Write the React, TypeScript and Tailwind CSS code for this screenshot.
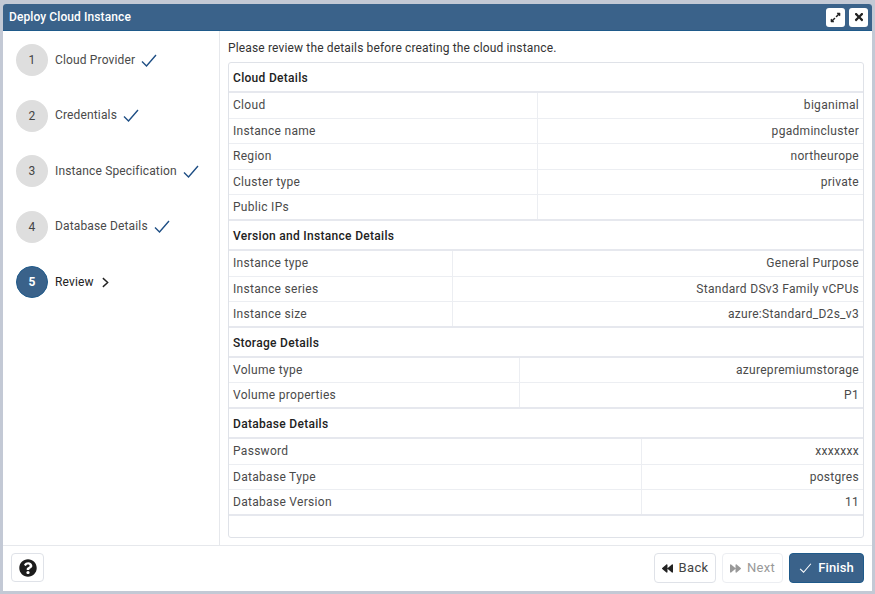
import React from 'react'
import { FaBackward, FaExpandAlt, FaForward, FaQuestionCircle, FaTimes } from 'react-icons/fa'

const steps = ['Cloud Provider', 'Credentials', 'Instance Specification', 'Database Details', 'Review']

const sections = [
  {
    title: 'Cloud Details',
    labelWidth: 'grid-cols-[309px_1fr]',
    rows: [
      ['Cloud', 'biganimal'],
      ['Instance name', 'pgadmincluster'],
      ['Region', 'northeurope'],
      ['Cluster type', 'private'],
      ['Public IPs', ''],
    ],
  },
  {
    title: 'Version and Instance Details',
    labelWidth: 'grid-cols-[224px_1fr]',
    rows: [
      ['Instance type', 'General Purpose'],
      ['Instance series', 'Standard DSv3 Family vCPUs'],
      ['Instance size', 'azure:Standard_D2s_v3'],
    ],
  },
  {
    title: 'Storage Details',
    labelWidth: 'grid-cols-[291px_1fr]',
    rows: [
      ['Volume type', 'azurepremiumstorage'],
      ['Volume properties', 'P1'],
    ],
  },
  {
    title: 'Database Details',
    labelWidth: 'grid-cols-[413px_1fr]',
    rows: [
      ['Password', 'xxxxxxx'],
      ['Database Type', 'postgres'],
      ['Database Version', '11'],
    ],
  },
]

const Check = ({ className }: { className: string }) => (
  <svg viewBox="0 0 16 13" className={className} fill="none" stroke="currentColor" strokeWidth="1.4">
    <path d="M1 7.5 L5.5 12 L15 1" />
  </svg>
)

const App: React.FC = () => {
  return (
    <div className="h-[594px] w-[875px] overflow-hidden bg-[#c3c9d5] pl-[3px] pr-[3px] pt-[4px] pb-[3px] font-['Roboto',sans-serif] text-[12px] tracking-[0.15px] text-[#222]">
      <div className="flex h-full flex-col overflow-hidden rounded-t-[3px] bg-white">
        {/* Title bar */}
        <div className="flex h-[27px] shrink-0 items-center justify-between border-b border-[#1f5a8a] bg-[#3a628a] pl-[6px] pr-[4px]">
          <span className="text-[12px] font-medium tracking-[0.1px] text-white">Deploy Cloud Instance</span>
          <div className="flex gap-[4px]">
            <button className="flex h-[19px] w-[19px] items-center justify-center rounded-[3px] bg-white text-[#222]">
              <FaExpandAlt className="h-[11px] w-[11px]" />
            </button>
            <button className="flex h-[19px] w-[19px] items-center justify-center rounded-[3px] bg-white text-[#222]">
              <FaTimes className="h-[12px] w-[12px]" />
            </button>
          </div>
        </div>

        {/* Body */}
        <div className="flex min-h-0 flex-1">
          <div className="flex w-[217px] shrink-0 flex-col gap-[23.6px] border-r border-[#e6e8ec] pl-[13px] pt-[13px]">
            {steps.map((step, i) => {
              const active = i === 4
              return (
                <div key={step} className="flex h-[32px] items-center">
                  <div
                    className={
                      active
                        ? 'flex h-[32px] w-[32px] items-center justify-center rounded-full border border-[#1f5a8a] bg-[#3a628a] font-bold text-white'
                        : 'flex h-[32px] w-[32px] items-center justify-center rounded-full bg-[#dedede] text-[#444]'
                    }
                  >
                    {i + 1}
                  </div>
                  <span className={active ? 'ml-[7px] pb-[1px] text-[#222]' : 'ml-[7px] pb-[1px] text-[#4a4a4a]'}>{step}</span>
                  {active ? (
                    <svg viewBox="0 0 8 12" className="ml-[8px] h-[11px] w-[7px] text-[#222]" fill="none" stroke="currentColor" strokeWidth="1.6">
                      <path d="M1 1 L6.5 6 L1 11" />
                    </svg>
                  ) : (
                    <Check className="ml-[6px] h-[13px] w-[16px] text-[#1f4f85]" />
                  )}
                </div>
              )
            })}
          </div>

          <div className="flex min-w-0 flex-1 flex-col pl-[8px] pr-[8px] pt-[10px] pb-[7px]">
            <p className="h-[21px] shrink-0 leading-[15px] text-[#333]">Please review the details before creating the cloud instance.</p>
            <div className="min-h-0 flex-1 rounded-[3px] border border-[#dfe2e8] tracking-[0.3px]">
              {sections.map((section) => (
                <div key={section.title}>
                  <div className="flex h-[30px] items-center border-b-2 border-[#e6e8ee] pl-[4px] pt-[2px] font-medium text-[#222]">
                    {section.title}
                  </div>
                  {section.rows.map(([label, value], i) => (
                    <div
                      key={label}
                      className={`grid h-[25.6px] ${section.labelWidth} ${
                        i === section.rows.length - 1 ? 'border-b-2 border-[#e6e8ee]' : 'border-b border-[#eceef2]'
                      }`}
                    >
                      <div className="flex items-center border-r border-[#eceef2] pl-[4px] text-[#4a4a4a]">{label}</div>
                      <div className="flex items-center justify-end pr-[4px] text-[#4a4a4a]">{value}</div>
                    </div>
                  ))}
                </div>
              ))}
            </div>
          </div>
        </div>

        {/* Footer */}
        <div className="flex h-[46px] shrink-0 items-start justify-between border-t border-[#e6e8ec] pl-[8px] pr-[8px] pt-[7px] text-[13px] tracking-[0.3px]">
          <button className="flex h-[29px] w-[33px] items-center justify-center rounded-[4px] border border-[#dfe2e8] bg-white">
            <FaQuestionCircle className="h-[18px] w-[18px] text-[#1c1c1c]" />
          </button>
          <div className="flex gap-[6px]">
            <button className="flex h-[30px] w-[62px] items-center justify-center gap-[6px] rounded-[4px] border border-[#dfe2e8] bg-white text-[#444]">
              <FaBackward className="h-[11px] w-[11px] text-[#222]" />
              Back
            </button>
            <button className="flex h-[30px] w-[61px] items-center justify-center gap-[6px] rounded-[4px] border border-[#eceef2] bg-white text-[#999]">
              <FaForward className="h-[11px] w-[11px] text-[#999]" />
              Next
            </button>
            <button className="flex h-[30px] w-[75px] items-center justify-center gap-[6px] rounded-[4px] border border-[#1f5a8a] bg-[#3a628a] font-medium tracking-[0.1px] text-white">
              <Check className="h-[10px] w-[13px] text-white" />
              Finish
            </button>
          </div>
        </div>
      </div>
    </div>
  )
}

export default App
